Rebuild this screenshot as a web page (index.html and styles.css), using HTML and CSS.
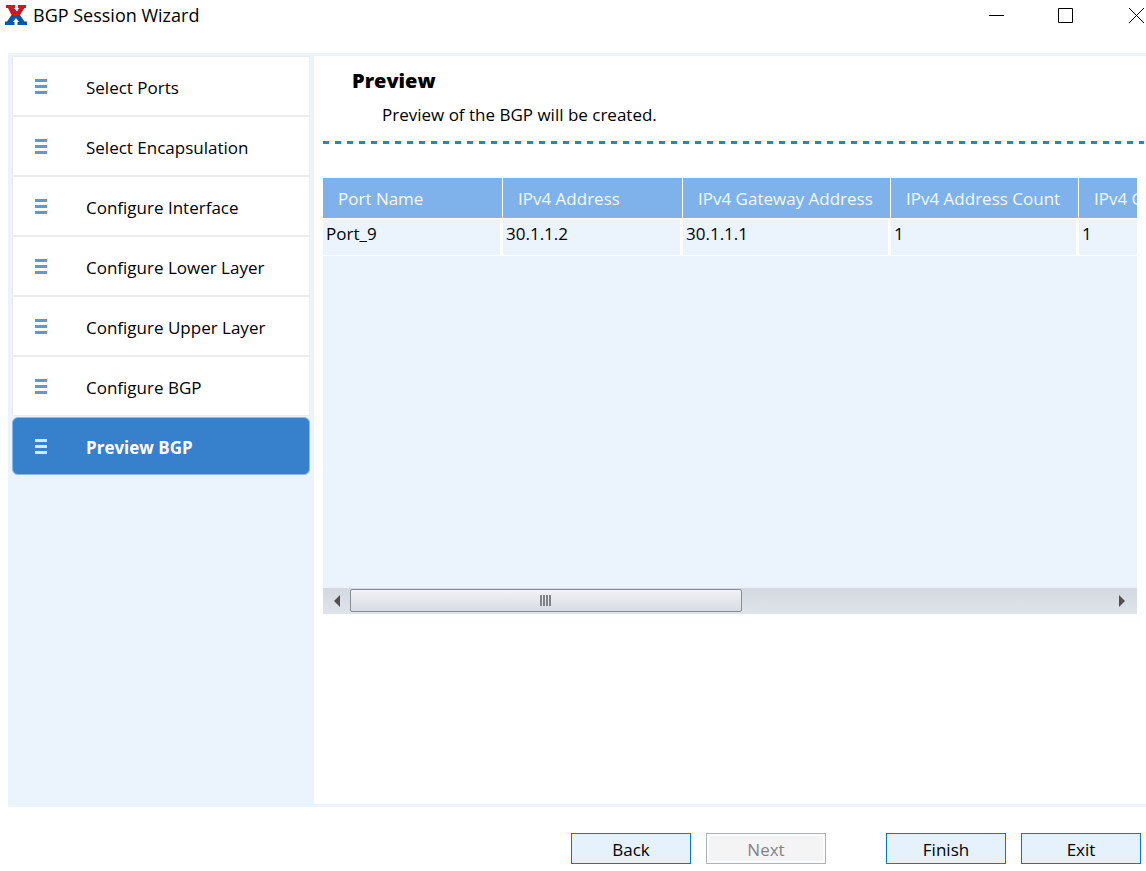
FILE: index.html
```html
<!DOCTYPE html>
<html lang="en">
<head>
<meta charset="utf-8">
<title>BGP Session Wizard</title>
<link rel="stylesheet" href="styles.css">
</head>
<body>
<header class="titlebar">
  <svg class="logo" width="22" height="20" viewBox="0 0 22 20" aria-hidden="true">
    <path fill="#d0171d" d="M1 0H10V3H9L12 6.500L14 3H13V0H21V3H19.500L15 10H6.500L3 3H1Z"/>
    <path fill="#0757a8" d="M6.500 10H15L19.500 16.500H22V20H12.500V17H14L11 13L8 17H9.500V20H0V16.500H2Z"/>
  </svg>
  <h1 class="titlebar-text">BGP Session Wizard</h1>
  <div class="window-controls">
    <button class="window-button" type="button" aria-label="Minimize"><svg width="15" height="15" viewBox="0 0 15 15"><path d="M0 7.500H15"/></svg></button>
    <button class="window-button" type="button" aria-label="Maximize"><svg width="15" height="15" viewBox="0 0 15 15"><path d="M.5 .5H14.500V14.500H.5Z"/></svg></button>
    <button class="window-button window-close" type="button" aria-label="Close"><svg width="15" height="15" viewBox="0 0 15 15"><path d="M0 0L15 15M15 0L0 15"/></svg></button>
  </div>
</header>

<main class="wizard">
  <nav class="steps" aria-label="Wizard steps">
    <button class="step" type="button"><span class="step-icon"></span>Select Ports</button>
    <button class="step" type="button"><span class="step-icon"></span>Select Encapsulation</button>
    <button class="step" type="button"><span class="step-icon"></span>Configure Interface</button>
    <button class="step" type="button"><span class="step-icon"></span>Configure Lower Layer</button>
    <button class="step" type="button"><span class="step-icon"></span>Configure Upper Layer</button>
    <button class="step" type="button"><span class="step-icon"></span>Configure BGP</button>
    <button class="step step-current" type="button" aria-current="step"><span class="step-icon"></span>Preview BGP</button>
  </nav>

  <section class="page">
    <div class="page-head">
      <h2 class="page-title">Preview</h2>
      <p class="page-note">Preview of the BGP will be created.</p>
    </div>
    <div class="divider"></div>
    <div class="grid">
      <div class="grid-view">
        <table class="grid-table">
          <colgroup><col class="col-m"><col class="col-m"><col class="col-xl"><col class="col-l"><col class="col-l"></colgroup>
          <thead>
            <tr><th>Port Name</th><th>IPv4 Address</th><th>IPv4 Gateway Address</th><th>IPv4 Address Count</th><th>IPv4 G</th></tr>
          </thead>
          <tbody>
            <tr><td>Port_9</td><td>30.1.1.2</td><td>30.1.1.1</td><td>1</td><td>1</td></tr>
          </tbody>
        </table>
      </div>
      <div class="scrollbar">
        <button class="scroll-arrow" type="button" aria-label="Scroll left"><svg width="6" height="12" viewBox="0 0 6 12"><path d="M6 0V12L0 6Z"/></svg></button>
        <div class="scroll-track"><div class="scroll-thumb"><span class="scroll-grip"></span></div></div>
        <button class="scroll-arrow scroll-arrow-right" type="button" aria-label="Scroll right"><svg width="6" height="12" viewBox="0 0 6 12"><path d="M0 0V12L6 6Z"/></svg></button>
      </div>
    </div>
  </section>
</main>

<footer class="actions">
  <div class="action-group">
    <button class="action" type="button">Back</button>
    <button class="action" type="button" disabled>Next</button>
  </div>
  <div class="action-group">
    <button class="action" type="button">Finish</button>
    <button class="action" type="button">Exit</button>
  </div>
</footer>
</body>
</html>
```
FILE: styles.css
```css
* {
  box-sizing: border-box;
}

body {
  margin: 0;
  min-height: 100vh;
  display: flex;
  flex-direction: column;
  background: #fff;
  color: #000;
  font: 17px/24px "Open Sans", "Noto Sans", sans-serif;
  overflow-x: hidden;
}

button {
  margin: 0;
  padding: 0;
  border: 0;
  background: none;
  color: inherit;
  font: inherit;
}

/* Title bar */
.titlebar {
  display: flex;
  align-items: flex-start;
  height: 53px;
  padding-left: 5px;
}

.logo {
  margin-top: 5px;
}

.titlebar-text {
  flex: 1;
  margin: 0;
  padding: 3px 0 0 6px;
  font-size: 18px;
  font-weight: 400;
}

.window-controls {
  display: flex;
}

.window-button {
  display: flex;
  align-items: center;
  justify-content: center;
  width: 69px;
  height: 31px;
}

.window-close {
  width: 46px;
  justify-content: flex-end;
  padding-right: 2px;
}

.window-button path {
  fill: none;
  stroke: #000;
}

/* Wizard frame */
.wizard {
  flex: 1;
  display: grid;
  grid-template-columns: 306px minmax(0, 1fr);
  margin-left: 8px;
  border: solid #ebf4fc;
  border-width: 3px 0;
}

.steps {
  display: flex;
  flex-direction: column;
  padding: 0 4px;
  background: #ebf4fc;
}

.step {
  display: flex;
  align-items: center;
  gap: 39px;
  height: 60px;
  padding: 4px 22px 0;
  border: 1px solid #ececec;
  background: #fff;
  text-align: left;
}

.step-icon {
  width: 12px;
  height: 15px;
  margin-top: -4px;
  background: repeating-linear-gradient(#5b9bd5 0 3px, transparent 3px 6px);
}

.step-current {
  height: 58px;
  margin-top: 1px;
  border-color: #8fb8e2;
  border-radius: 6px;
  background: #3781cc;
  color: #fff;
  font-weight: 700;
}

.step-current .step-icon {
  background: repeating-linear-gradient(#d7e6f5 0 3px, transparent 3px 6px);
}

/* Page */
.page {
  padding-left: 9px;
}

.page-head {
  padding: 13px 0 0 29px;
}

.page-title {
  margin: 0;
  font-size: 20px;
  font-weight: 800;
}

.page-note {
  margin: 0;
  padding: 10px 0 14px 30px;
}

.divider {
  height: 3px;
  margin-right: 2px;
  background: repeating-linear-gradient(90deg, #0a8fd2 0 6px, transparent 6px 12px);
}

.grid {
  margin: 34px 9px 0 0;
}

.grid-view {
  height: 410px;
  overflow: hidden;
  background: #ebf4fc;
}

.grid-table {
  width: 944px;
  table-layout: fixed;
  border-collapse: separate;
  border-spacing: 0;
}

.col-m {
  width: 180px;
}

.col-xl {
  width: 208px;
}

.col-l {
  width: 188px;
}

.grid-table th {
  height: 41px;
  padding: 1px 0 0 15px;
  border: solid #fff;
  border-width: 0 1px 1px 0;
  background: #7fb2ea;
  color: #f4f9ff;
  font-weight: 400;
  text-align: left;
  white-space: nowrap;
}

.grid-table td {
  height: 37px;
  padding: 3px;
  border: solid #fff;
  border-width: 0 3px 1px 0;
  vertical-align: top;
}

/* Scrollbar */
.scrollbar {
  display: flex;
  height: 26px;
  background: linear-gradient(#d4d9e1, #dfe3ea);
}

.scroll-arrow {
  display: flex;
  align-items: center;
  justify-content: center;
  width: 27px;
}

.scroll-arrow-right {
  padding-right: 4px;
}

.scroll-arrow path {
  fill: #505050;
}

.scroll-track {
  flex: 1;
  padding: 1px 0 2px;
}

.scroll-thumb {
  display: flex;
  align-items: center;
  justify-content: center;
  width: 392px;
  height: 23px;
  padding-right: 2px;
  border: 1px solid #868d96;
  border-radius: 2px;
  background: linear-gradient(#f0f2f6, #d9dce3);
}

.scroll-grip {
  width: 11px;
  height: 11px;
  background: repeating-linear-gradient(90deg, #808389 0 2px, transparent 2px 3px);
}

/* Buttons */
.actions {
  display: flex;
  flex-wrap: wrap;
  justify-content: flex-end;
  gap: 60px;
  padding: 26px 5px 7px;
}

.action-group {
  display: flex;
  gap: 15px;
}

.action {
  width: 120px;
  height: 31px;
  padding-top: 2px;
  border: 1px solid #0078d7;
  background: #e5f1fb;
}

.action:disabled {
  border-color: #adb2b5;
  background: #f4f4f4;
  box-shadow: inset 0 0 0 2px #fcfcfc;
  color: #838383;
}
```
